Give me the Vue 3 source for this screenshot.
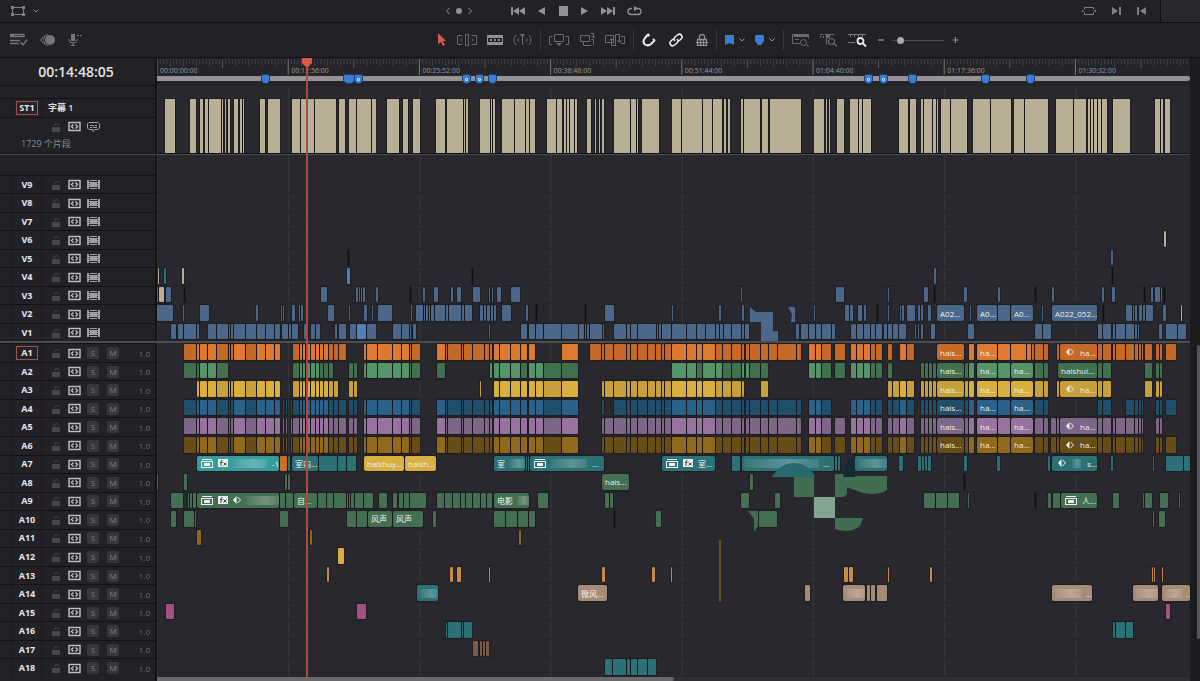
<template>
  <div class="editor">
    <header class="transport-bar">
      <div class="view-mode">
        <button v-for="n in ['frame', 'chevron']" :key="n" :aria-label="n"><Icon :name="n" /></button>
      </div>
      <div class="keyframe-nav">
        <button v-for="n in ['prevKey', 'dot', 'nextKey']" :key="n" :aria-label="n"><Icon :name="n" /></button>
      </div>
      <div class="transport">
        <button v-for="n in ['toStart', 'reverse', 'stop', 'play', 'toEnd', 'loop']" :key="n" :aria-label="n">
          <Icon :name="n" />
        </button>
      </div>
      <div class="match-tools">
        <button v-for="n in ['fit', 'markOut', 'markIn']" :key="n" :aria-label="n"><Icon :name="n" /></button>
      </div>
      <div class="bar-corner"></div>
    </header>

    <div class="toolbar">
      <div class="tools-left">
        <button v-for="n in ['viewOptions', 'curves', 'mic']" :key="n" :aria-label="n"><Icon :name="n" /></button>
      </div>
      <div class="tools-edit">
        <button class="is-red" aria-label="select"><Icon name="arrow" /></button>
        <button class="dim" aria-label="trim"><Icon name="trim" /></button>
        <button aria-label="blade"><Icon name="blade" /></button>
        <button class="dim" aria-label="dynamic trim"><Icon name="dynamic" /></button>
        <i class="sep"></i>
        <button class="dim" aria-label="insert"><Icon name="insert" /></button>
        <button class="dim" aria-label="overwrite"><Icon name="overwrite" /></button>
        <button class="dim" aria-label="replace"><Icon name="replace" /></button>
        <i class="sep"></i>
        <div class="toggles">
          <button class="is-on" aria-label="snap"><Icon name="magnet" /></button>
          <button class="is-on" aria-label="link"><Icon name="link" /></button>
          <button aria-label="lock"><Icon name="padlock" /></button>
        </div>
        <i class="sep"></i>
        <div class="pair">
          <button class="is-blue" aria-label="flag"><Icon name="flag" /></button>
          <button aria-label="flag colors"><Icon name="chevron" /></button>
        </div>
        <div class="pair">
          <button class="is-blue" aria-label="marker"><Icon name="marker" /></button>
          <button aria-label="marker colors"><Icon name="chevron" /></button>
        </div>
        <i class="sep"></i>
        <button class="dim" aria-label="zoom full"><Icon name="zoomFull" /></button>
        <button class="dim" aria-label="zoom detail"><Icon name="zoomDetail" /></button>
        <button class="is-on" aria-label="zoom custom"><Icon name="zoomCustom" /></button>
        <div class="zoom">
          <button class="dim" aria-label="zoom out"><Icon name="minus" /></button>
          <input v-model="zoom" type="range" min="0" max="100" aria-label="timeline zoom" />
          <button aria-label="zoom in"><Icon name="plus" /></button>
        </div>
      </div>
    </div>

    <main class="arrange">
      <div class="tracks">
        <div class="row ruler-row">
          <div class="head timecode">00:14:48:05</div>
          <div class="ruler">
            <svg class="ticks" width="100%" height="18">
              <line
                v-for="t in ticks"
                :key="t.i"
                :x1="t.x"
                :x2="t.x"
                y1="1"
                :y2="t.len"
                :class="t.kind"
              />
            </svg>
            <span v-for="r in rulerLabels" :key="r.text" class="ruler-label" :style="{ left: r.left }">{{ r.text }}</span>
            <div class="overview"></div>
            <i
              v-for="m in markers"
              :key="m.x"
              class="pin"
              :class="{ wide: m.wide, ring: m.ring }"
              :style="{ left: pct(m.x) }"
            ></i>
          </div>
        </div>

        <div class="row spacer">
          <div class="head"></div>
          <div class="lane"></div>
        </div>

        <div class="row subtitle">
          <div class="head">
            <div class="sub-top">
              <span class="grip"></span>
              <span class="name"><b class="target">ST1</b></span>
              <span class="title">字幕 1</span>
            </div>
            <div class="sub-icons">
              <button class="lock" aria-label="lock ST1"><Icon name="lock" /></button>
              <button class="sync" aria-label="sync ST1"><Icon name="sync" /></button>
              <button class="film" aria-label="show ST1"><Icon name="caption" /></button>
            </div>
            <div class="count">1729 个片段</div>
          </div>
          <div class="lane">
            <i v-for="c in subtitleClips" :key="c.key" class="clip cream" :style="c.style"></i>
          </div>
        </div>

        <div class="divider"></div>
        <div class="row gap">
          <div class="head"></div>
          <div class="lane"></div>
        </div>

        <section v-for="group in groups" :key="group.id" :class="group.id">
          <div v-for="t in group.tracks" :key="t.name" class="row track">
            <div class="head">
              <span class="grip"></span>
              <span class="name"><b :class="{ target: t.name === 'A1' }">{{ t.name }}</b></span>
              <button class="lock" :aria-label="'lock ' + t.name"><Icon name="lock" /></button>
              <button class="sync" :aria-label="'sync ' + t.name"><Icon name="sync" /></button>
              <button v-if="group.id === 'video'" class="film" :aria-label="'show ' + t.name"><Icon name="film" /></button>
              <template v-else>
                <button class="sm">S</button>
                <button class="sm">M</button>
                <span class="gain">1.0</span>
              </template>
            </div>
            <div class="lane">
              <i v-for="c in t.clips" :key="c.key" class="clip" :class="[t.color, c.mod]" :style="c.style"></i>
              <div
                v-for="l in t.named"
                :key="l.key"
                class="clip named"
                :class="[l.color, { inset: l.icons || l.phase }]"
                :style="l.style"
              >
                <Icon v-if="l.icons" name="card" />
                <Icon v-if="l.icons === 2" name="fx" />
                <Icon v-if="l.phase" name="phase" />
                <i v-if="l.smudge" class="smudge"></i>
                <span v-if="l.text">{{ l.text }}</span>
              </div>
            </div>
          </div>
        </section>

        <div class="row bottom">
          <div class="head"></div>
          <div class="hscroll"><i></i></div>
        </div>

        <!-- spans the lanes only, so percentages match the clips -->
        <div class="overlay">
          <svg viewBox="157 58 1033 619" preserveAspectRatio="none">
            <g fill="#4b678a">
              <path d="M750 307l6 5h17v19h5v10h-17v-19h-11z" />
              <path d="M788 307h7v15h-4l1-8z" />
            </g>
            <path fill="#416d50" d="M748 511h10v15l-4 6v-13z" />
            <g fill="#416d50">
              <path d="M794 474h20v23h-20z" />
              <path d="M835 474h12v20l-3 3h-9z" />
              <path d="M843 476h44v14q-14 8-32 0l-12-4z" />
              <path d="M835 518h28l-3 8q-10 8-25 3z" />
            </g>
            <path fill="#7fa58f" d="M814 497h21v21h-21z" />
            <path fill="#28686e" d="M772 477q8-14 22-14t21 14z" />
            <path fill="#102b31" d="M843 477l5-16 7-4v20z" />
            <path fill="#66501f" d="M719 540h2v62h-2z" />
          </svg>
          <div class="playhead" :style="{ left: playhead }">
            <svg width="12" height="10" viewBox="0 0 12 10"><path d="M1 0h10v5L7 9H5L1 5z" fill="#dd5a4b" /></svg>
          </div>
        </div>
      </div>

      <aside class="vscroll">
        <i class="before"></i>
        <i class="thumb"></i>
        <i class="after"></i>
      </aside>
    </main>
  </div>
</template>

<script setup>
import { h, ref } from 'vue'

const zoom = ref(12)

// width, height, filled path, stroked path
const ICONS = {
  frame: [14, 12, 'M0 1h3v3H0zM11 1h3v3h-3zM0 8h3v3H0zM11 8h3v3h-3z', 'M2 2.500h10M2 9.500h10M1.500 3v6M12.500 3v6'],
  chevron: [6, 6, '', 'M.5 1.500l2.500 2.500 2.500-2.500'],
  prevKey: [4, 8, '', 'M3.500 1L.5 4l3 3'],
  nextKey: [4, 8, '', 'M.5 1l3 3-3 3'],
  dot: [6, 8, 'M3 1a3 3 0 1 1 0 6a3 3 0 1 1 0-6z', ''],
  toStart: [15, 10, 'M0 1h2v8H0zM8 1v8L2 5zM14 1v8L8 5z', ''],
  reverse: [8, 10, 'M7 1v8L0 5z', ''],
  stop: [10, 10, 'M1 0h9v10H1z', ''],
  play: [8, 10, 'M1 1v8l7-4z', ''],
  toEnd: [15, 10, 'M13 1h2v8h-2zM7 1v8l6-4zM1 1v8l6-4z', ''],
  loop: [15, 11, 'M7 0v5l4-2.500z', 'M5 2.500H4a3 3 0 0 0 0 6h7a3 3 0 0 0 0-6h-1', 1.3],
  fit: [14, 10, 'M0 3.500v3L2 5zM14 3.500v3L12 5z', 'M2.500 3.500v-2h9v2M2.500 6.500v2h9v-2'],
  markOut: [9, 10, 'M0 1v8l6-4zM7 1h2v8H7z', ''],
  markIn: [9, 10, 'M9 1v8L3 5zM0 1h2v8H0z', ''],
  viewOptions: [18, 14, 'M0 1h4v3H0z', 'M0 1.500h14v2H0M0 7.500h10M0 10.500h9M10.500 9l2.500 3 4-5.500', 1.3],
  curves: [16, 12, 'M10 1a5 5 0 1 1 0 10a5 5 0 1 1 0-10z', 'M8 .5L5.500 1.500 3 6l2.500 4.500L8 11.500M4.500 1.500L.5 6l4 4.500'],
  mic: [14, 14, 'M3 1h4v7H3z', 'M1 6v1q0 3 4 3t4-3V6M5 10v3M3 12.500h4M9 2.500h2M12 2.500h2'],
  arrow: [10, 14, 'M1 0l8 8H6l2 4-2 1-2-4-3 2z', ''],
  trim: [20, 14, '', 'M8.500 1.500h3v11h-3zM5.500 2.500h-5v9h5M14.500 2.500h5v9h-5M5.500 5L3.500 7l2 2M14.500 5l2 2-2 2'],
  blade: [16, 12, 'M0 1h16v3H0zM0 8h16v3H0zM0 4h1v4H0zM15 4h1v4h-1zM3 5h2v2H3zM7 5h2v2H7zM11 5h2v2h-2z', ''],
  dynamic: [19, 14, 'M7 1h5l-2 3H9z', 'M9.500 2v10M3 2q-4 5 0 10M16 2q4 5 0 10M6.500 5l-2 2 2 2M12.500 5l2 2-2 2'],
  insert: [20, 14, 'M7 10h6l-3 3z', 'M5.500 1.500h9v7h-9zM3.500 3.500h-3v8h3M16.500 3.500h3v8h-3'],
  overwrite: [16, 14, '', 'M1.500 2.500h9v6h-9zM4.500 8.500v4h8M12 .5h2.500v4M12.500 3l2 2 1.500-2M12.500 6.500h2v6'],
  replace: [20, 14, '', 'M.5 2.500h8v7h-8zM6.500 12.500v-7M4.500 7.500l2-2 2 2M6.500 12.500h4V1.500h4v8M12.500 7l2 2.500 2-2.500M16 3.500h3.500v7H16'],
  magnet: [14, 14, '', 'M6 1.500L3 5q-3 4 0 6.500 3 2 6-.5l3.500-3.500M5.500 1l2 2M11 6l2 2', 2],
  link: [14, 14, '', 'M6 8Q4 6 6 4l2.500-2Q11 0 12.500 2.500 14 4 12 6l-2 2M8 6q2 2 0 4l-2.500 2Q3 14 1.500 11.500 0 10 2 8l2-2', 1.6],
  padlock: [12, 12, 'M0 8h12v1H0z', 'M3.500 5V2.500q0-2 2.500-2t2.500 2V5M1.500 5.500h9v6h-9zM4.500 6v5M7.500 6v5', 1.3],
  flag: [9, 10, 'M0 0h9v10L4.500 8 0 10z', ''],
  marker: [9, 10, 'M1 0h7l1 1v5L6 10H3L0 6V1z', ''],
  zoomFull: [18, 14, 'M2 1h14v3H2z', 'M.5 1.500h16v4M.5 1.500v9h8M3 6.500h4M14.500 9.500a3 3 0 1 0-6 0a3 3 0 1 0 6 0M14 11.500l3 2'],
  zoomDetail: [18, 14, 'M7 1h3v4H7z', 'M0 1.500h3M5 1.500h9M6.500 1.500v10M.5 3v2M3.500 3v2M14.500 8.500a3 3 0 1 0-6 0a3 3 0 1 0 6 0M14 10.500l3 3', 1.2],
  zoomCustom: [20, 14, '', 'M15.500 8a3 3 0 1 0-6 0a3 3 0 1 0 6 0M15 10.500l3 3', 1.8],
  minus: [6, 8, 'M0 3h6v2H0z', ''],
  plus: [7, 8, '', 'M3.500 1v6M.5 4h6'],
  lock: [10, 10, 'M1 5h8v5H1z', 'M3.500 4V3.500q0-2 2-2t2 2'],
  sync: [13, 11, '', 'M1 1.500h11v8H1zM5.500 3.500l-2 2 2 2M7.500 3.500l2 2-2 2', 1.5],
  film: [13, 11, 'M0 1h2v9H0zM11 1h2v9h-2zM3 1h7v1H3zM3 9h7v1H3zM3 3h7v5H3zM2 3h9v1H2zM2 5h9v1H2zM2 7h9v1H2z', ''],
  caption: [13, 11, 'M3 4h4v1H3zM8 4h2v1H8zM3 6h2v1H3zM6 6h4v1H6z', 'M2 1.500h9l1.500 1.500v4L11 8.500H8l-2 2v-2H2L.5 7V3z'],
  card: [12, 9, 'M1 0h10v1H1zM0 2h12v1H0zM0 3h1v6H0zM11 3h1v6h-1zM1 8h10v1H1zM3 4h6v3H3z', ''],
  fx: [10, 8, 'M0 0h10v8H0z', ''],
  phase: [8, 8, 'M3.500 0v8L0 4z', 'M4.500 1l3 3-3 3']
}

const Icon = ({ name }) => {
  const [w, ht, fill, stroke, sw] = ICONS[name]
  return h('svg', { class: 'icon icon-' + name, width: w, height: ht, viewBox: `0 0 ${w} ${ht}` }, [
    fill && h('path', { d: fill, fill: 'currentColor' }),
    stroke && h('path', { d: stroke, fill: 'none', stroke: 'currentColor', 'stroke-width': sw || 1 }),
    name === 'zoomCustom' && h('path', { d: 'M0 1.500h18M2.500 2v2M6.500 2v2M10.500 2v2M14.500 2v2M0 9.500h7', fill: 'none', stroke: '#7c7c80' }),
    name === 'fx' && h('path', { d: 'M4.500 1.500Q3 1 3 3v4M2 3.500h2.500M5.500 3.500l3 3M8.500 3.500l-3 3', fill: 'none', stroke: '#2c5550' })
  ])
}
Icon.props = ['name']

// visible range of the timeline, in timeline units
const FROM = 157
const TO = 1190
const pct = (x) => `${((x - FROM) / (TO - FROM)) * 100}%`
const len = (w) => `${(w / (TO - FROM)) * 100}%`

const playhead = pct(306)
const STEP = 131.2

const ticks = Array.from({ length: 315 }, (_, i) => {
  const kind = i % 40 === 0 ? 'major' : i % 20 === 0 ? 'mid' : 'minor'
  return { i, kind, x: pct(FROM + (i * STEP) / 40), len: { major: 17, mid: 10, minor: i % 4 ? 6 : 8 }[kind] }
})

const rulerLabels = [
  '00:00:00:00', '00:12:56:00', '00:25:52:00', '00:38:48:00',
  '00:51:44:00', '01:04:40:00', '01:17:36:00', '01:30:32:00'
].map((text, i) => ({ text, left: pct(FROM + 3 + i * STEP) }))

const markers = [
  { x: 266 }, { x: 348, wide: true }, { x: 359, ring: true }, { x: 467, ring: true },
  { x: 480, ring: true }, { x: 493 }, { x: 869, ring: true }, { x: 884, ring: true },
  { x: 913 }, { x: 986 }, { x: 1031 }
]

// "start-end" pairs, an optional letter picks the shade
const MODS = { d: 'dark', l: 'light', k: 'black', c: 'cream', o: 'orange', t: 'teal' }
const parse = (s) =>
  s.trim().split(/\s+/).filter(Boolean).map((p) => {
    const [, a, b, m] = p.match(/(\d+)-(\d+)([a-z]?)/)
    return { a: +a, b: +b, m }
  })
const toClip = ({ a, b, m }) => ({
  key: `${a}-${b}-${m}`,
  mod: MODS[m] || '',
  style: { left: pct(a), width: len(b - a) }
})
const clips = (s) => parse(s).map(toClip)

// edit points shared by the production sound tracks
const CUTS = parse(`
  184-196 197-199 200-207 208-216 217-228 229-230 231-233 234-245 246-256 257-265 266-274 275-280
  283-284 286-287 291-292 293-299 300-302 303-305 306-310 311-315 316-319 320-323 324-328 329-333 334-338 339-346
  349-353 354-357 364-366 367-377 378-392 393-401 402-409 410-411 412-420
  437-445 446-447 448-461 462-463 464-472 473-484 485-489 490-492 494-499 500-510 511-520 521-527
  529-535 536-543 544-561 562-578 590-601 602-604 605-613 614-626 627-630 631-637 638-647 648-655 656-661
  662-664 665-671 672-686 687-696 697-702 703-715 716-722 723-731 732-741 742-744 746-749 750-760 761-768
  769-777 778-796 797-801 809-815 816-821 822-831 835-845
  851-856 857-863 864-870 871-875 876-882 888-892 893-899 900-906 907-914
  921-924 925-928 929-932 933-936 937-964 965-968 969-974 977-997 998-1010 1011-1026 1027-1031 1032-1034 1035-1043 1044-1048
  1051-1056 1057-1059 1060-1097 1098-1102 1103-1111 1113-1115 1116-1125 1126-1134 1135-1138 1139-1141 1142-1143
  1145-1152 1156-1159 1160-1162 1166-1176`)

const LOUD = '197-216 234-245 256-280 296-331 364-409 437-445 494-543 562-578 672-715 809-821 851-870 900-906 969-1031'

const bed = (spans, loud = LOUD) => {
  const bright = parse(loud)
  return parse(spans).flatMap(({ a, b }) =>
    CUTS.filter((c) => c.a >= a && c.b <= b).map((c) =>
      toClip({ ...c, m: bright.some((r) => c.a >= r.a && c.b <= r.b) ? '' : 'd' })
    )
  )
}

const named = (list) =>
  list.map(([a, b, color, text, extra]) => ({
    key: a, color, text, ...extra, style: { left: pct(a), width: len(b - a) }
  }))

const subtitleClips = clips(`
  165-175 190-196 200-203 205-208 209-221 222-223 225-226 228-230 234-238 240-242 243-244 260-265 268-280
  292-300 301-314 315-336 339-345 349-356 357-371 372-376 387-399 403-408 413-420 436-445 447-463 464-465 466-468
  480-490 491-492 493-495 502-514 515-525 526-529 530-535 547-556 557-562 564-566 567-569 570-574 575-577
  587-591 595-596 599-600 602-604 614-630 631-636 637-638 642-659 672-681 682-702 703-712 713-722 724-726 728-730
  741-743 744-760 762-768 770-801 814-824 826-827 829-830 837-844 850-858 859-862 863-871 899-908 910-916
  921-923 924-932 933-936 937-938 941-950 951-967 973-990 991-1011 1014-1024 1025-1048 1056-1073 1074-1086
  1088-1090 1091-1093 1094-1097 1098-1101 1102-1107 1113-1130 1155-1160 1161-1163 1165-1170`)

const video = [
  { name: 'V9' }, { name: 'V8' }, { name: 'V7' },
  { name: 'V6', clips: clips('1164-1166c') },
  { name: 'V5', clips: clips('348-349k 1111-1113') },
  { name: 'V4', clips: clips('158-159c 164-166t 182-184c 347-350l 472-473k 934-936 1112-1113k') },
  {
    name: 'V3',
    clips: clips(`157-158 159-164c 166-171 184-185k 321-327 356-358 359-360 361-362 363-365 376-378 410-411k 423-425
      434-438 451-453 457-461 473-480 489-490 492-493 497-501 511-520 741-742 836-844 888-889 924-928 934-935k
      964-967 998-1000 1035-1036k 1052-1054 1102-1104 1112-1115 1144-1145k 1151-1153 1155-1160 1161-1162 1164-1165k`)
  },
  {
    name: 'V2',
    clips: clips(`157-173 183-184 200-209 256-258 281-282 283-284 292-295 299-300 301-303 328-334 349-350 364-367 372-373
      378-392 411-412 416-423 424-425 426-428 429-430 431-434 435-445 446-448 449-461 462-464 465-472 480-483
      484-486 487-490 491-493 494-496 502-511 526-528 536-537k 585-586k 605-614 672-673 719-721 742-744 814-815
      845-849 850-853 858-862 864-866 877-878k 888-889 900-901 902-904 907-915 918-920 921-923 928-931 970-971
      998-1010 1042-1043 1103-1104k 1126-1132 1133-1134 1135-1137 1139-1142 1143-1145 1146-1153 1163-1166 1181-1182c`),
    named: named([[937, 964, 'blue', 'A02...'], [977, 997, 'blue', 'A0...'], [1011, 1033, 'blue', 'A0...'], [1052, 1097, 'blue', 'A022_052...']])
  },
  {
    name: 'V1',
    clips: clips(`171-176 178-183 184-196 197-199 208-216 217-228 229-230 231-233 234-245 246-256 257-265 266-274 275-280
      282-288 289-291 292-298 304-308 311-315 316-320 335-337 339-346 350-356 357-366l 367-376 393-401 402-409
      410-411 413-416 489-490 521-527 529-535 536-543 544-561 562-578 579-584 585-586 587-589 590-602 603-604
      614-626 627-630 631-637 638-656 657-658 659-661 662-671 672-686 687-696 697-705 706-715 716-719 720-723
      724-731 732-741 742-744 745-749 796-799 801-808 809-815 816-821 822-831 832-835 851-856 857-863 864-870
      871-875 876-882 884-887 888-892 893-898 899-906 915-916 918-919 921-923 931-935 968-974 1035-1042 1043-1051
      1098-1102 1103-1111 1113-1115 1116-1125 1126-1134 1135-1137 1138-1139 1159-1162 1166-1177 1178-1186`)
  }
].map((t) => ({ color: 'blue', ...t }))

const audio = [
  {
    name: 'A1', color: 'orange',
    clips: bed('184-280 293-346 364-420 437-535 562-578 590-801 809-845 851-882 888-892 900-914 969-1048 1057-1059 1098-1176'),
    named: named([[937, 964, 'orange dark', 'hais...'], [977, 997, 'orange', 'ha...'], [1060, 1097, 'orange dark', 'ha...', { phase: true }]])
  },
  {
    name: 'A2', color: 'green',
    clips: bed(
      '184-228 293-333 349-357 364-420 437-445 490-578 672-768 809-845 851-882 888-892 921-936 965-1010 1035-1048 1098-1111 1145-1162',
      '200-216 300-319 364-409 490-520 529-543 672-696 703-722 742-749 809-821 851-870 969-1031'
    ),
    named: named([[937, 964, 'green dark', 'hais...'], [977, 997, 'green', 'ha...'], [1011, 1033, 'green', 'ha...'], [1058, 1097, 'green dark', 'haishui...']])
  },
  {
    name: 'A3', color: 'yellow',
    clips: [...bed('197-280 293-338 349-357 494-578 602-744 761-768 888-936 965-1010 1035-1048 1057-1059 1098-1111 1145-1162'), ...clips('480-481d')],
    named: named([[937, 964, 'yellow dark', 'hais...'], [977, 997, 'yellow', 'ha...'], [1011, 1033, 'yellow', 'ha...'], [1060, 1097, 'yellow dark', 'ha...', { phase: true }]])
  },
  {
    name: 'A4', color: 'navy',
    clips: bed('184-346 349-357 364-420 437-578 602-604 614-801 809-831 851-882 888-936 965-1010 1035-1048 1098-1111 1126-1143 1156-1176'),
    named: named([[937, 964, 'navy dark', 'hais...'], [977, 997, 'navy', 'ha...'], [1011, 1033, 'navy', 'ha...']])
  },
  {
    name: 'A5', color: 'purple',
    clips: bed('184-346 349-357 364-420 437-578 602-801 809-831 835-845 851-882 888-936 965-1010 1035-1059 1098-1143 1156-1162'),
    named: named([[937, 964, 'purple dark', 'hais...'], [977, 997, 'purple', 'ha...'], [1011, 1033, 'purple', 'ha...'], [1060, 1097, 'purple dark', 'ha...', { phase: true }]])
  },
  {
    name: 'A6', color: 'brown',
    clips: bed('184-346 349-357 364-420 437-578 602-801 809-831 835-845 851-882 888-936 965-1010 1035-1059 1098-1143 1156-1176'),
    named: named([[937, 964, 'brown dark', 'hais...'], [977, 997, 'brown', 'ha...'], [1011, 1033, 'brown', 'ha...'], [1060, 1097, 'brown dark', 'ha...', { phase: true }]])
  },
  {
    name: 'A7', color: 'teal',
    clips: clips(`280-287o 288-290 319-337 338-346 347-356 526-527 528-529 732-740 835-837 838-840 899-903 918-921 922-924
      925-927 928-931 964-967 997-1000 1048-1050 1111-1113 1153-1154 1166-1183 1184-1190`),
    named: named([
      [197, 279, 'aqua', '-1', { icons: 2, smudge: true }],
      [292, 318, 'teal', '室内...'],
      [364, 404, 'yellow', 'haishuy...'],
      [405, 436, 'yellow', 'haish...'],
      [494, 525, 'teal tail', '室', { smudge: true }],
      [530, 604, 'teal', '...', { icons: 1, smudge: true }],
      [662, 715, 'teal', '室...', { icons: 2 }],
      [742, 834, 'teal long', '...', { smudge: true }],
      [855, 887, 'teal', '', { smudge: true }],
      [1052, 1097, 'teal', 's...', { phase: true, smudge: true }]
    ])
  },
  {
    name: 'A8', color: 'green low',
    clips: clips('157-158 184-187 285-287 288-290 750-753 964-965k'),
    named: named([[602, 629, 'green low', 'hais...']])
  },
  {
    name: 'A9', color: 'green low',
    clips: clips(`171-183 188-189 190-192 193-196 280-285 286-293 318-326 327-333 334-346 347-348 349-350 351-354 355-363
      364-373 379-387 393-397 399-403 404-409 410-426 437-444 445-452 453-460 461-465 466-472 473-480 481-486 487-492
      538-548 605-609 610-613 741-749 775-780 924-935 936-947 948-959 968-969 1035-1036k 1048-1051 1053-1060
      1113-1119 1143-1144 1145-1152 1160-1168 1179-1180`),
    named: named([
      [197, 279, 'green low', '', { icons: 2, phase: true, smudge: true }],
      [294, 317, 'green low', '自...'],
      [494, 529, 'green low tail', '电影', { smudge: true }],
      [1061, 1097, 'green low', '人...', { icons: 1 }]
    ])
  },
  {
    name: 'A10', color: 'green low',
    clips: clips(`171-176 184-194 195-196 280-288 347-356 357-367 433-436 494-505 506-517 518-528 529-535 614-615k
      656-661 759-777 1153-1154 1159-1165`),
    named: named([[368, 392, 'green low', '风声'], [393, 423, 'green low', '风声']])
  },
  { name: 'A11', color: 'brown', clips: clips('197-201 310-312 519-521') },
  { name: 'A12', color: 'yellow', clips: clips('338-344') },
  {
    name: 'A13', color: 'amber',
    clips: clips('327-329 450-453 457-461 489-490 602-605 652-655 671-672 844-848 849-853 888-889 930-932 1152-1153 1154-1155 1162-1163')
  },
  {
    name: 'A14', color: 'tan',
    clips: clips('805-810 867-870 871-875 877-887'),
    named: named([
      [417, 438, 'teal', '', { smudge: true }],
      [578, 607, 'tan', '微风...'],
      [843, 865, 'tan', '', { smudge: true }],
      [1052, 1092, 'tan', '...', { smudge: true }],
      [1133, 1158, 'tan', '', { smudge: true }],
      [1162, 1190, 'tan', '..', { smudge: true }]
    ])
  },
  { name: 'A15', color: 'pink', clips: clips('166-174 357-366 1166-1170') },
  { name: 'A16', color: 'teal', clips: clips('446-447 448-461 462-463 464-472 1113-1115 1116-1125 1126-1133') },
  { name: 'A17', color: 'rust', clips: clips('473-478 480-482 483-485 486-489') },
  { name: 'A18', color: 'teal', clips: clips('605-612 613-626 627-630 631-637 638-647 648-656') }
]

const groups = [
  { id: 'video', tracks: video },
  { id: 'audio', tracks: audio }
]
</script>

<style>
body {
  margin: 0;
  background: #212126;
}
</style>

<style scoped>
.editor {
  display: flex;
  flex-direction: column;
  height: 100vh;
  overflow: hidden;
  background: #212126;
  color: #d8d8da;
  font-family: 'Open Sans', 'Noto Sans CJK SC', sans-serif;
  font-size: 9px;
}

button {
  display: flex;
  align-items: center;
  justify-content: center;
  flex: none;
  padding: 0;
  border: 0;
  background: none;
  color: #929295;
  font: inherit;
}

.icon {
  display: block;
  flex: none;
}

/* top bar */
.transport-bar {
  display: flex;
  align-items: center;
  flex: none;
  height: 22px;
  border-bottom: 1px solid #0f0f12;
}

.view-mode,
.keyframe-nav,
.transport,
.match-tools {
  display: flex;
  align-items: center;
}

.view-mode {
  gap: 8px;
  width: 435px;
  padding-left: 11px;
}

.view-mode button,
.match-tools button {
  color: #818184;
}

.keyframe-nav {
  gap: 6px;
  width: 65px;
}

.transport {
  gap: 12px;
}

.match-tools {
  gap: 16px;
  margin-left: auto;
  padding-right: 14px;
}

.bar-corner {
  align-self: stretch;
  width: 39px;
  border-left: 1px solid #0f0f12;
  background: #29282e;
}

/* toolbar */
.toolbar {
  display: flex;
  align-items: center;
  flex: none;
  height: 34px;
  border-bottom: 1px solid #0f0f12;
}

.tools-left {
  display: flex;
  align-items: center;
  gap: 12px;
  width: 427px;
  padding-left: 10px;
}

.tools-left button {
  color: #76767a;
}

.tools-edit {
  display: flex;
  align-items: center;
  gap: 10px;
}

.tools-edit .dim {
  color: #6c6c70;
}

.tools-edit .is-red {
  color: #cf5a4e;
}

.tools-edit .is-on {
  color: #ededee;
}

.tools-edit .is-blue {
  color: #3b7dd0;
}

.sep {
  width: 1px;
  height: 20px;
  margin: 0 -2px;
  background: #37373b;
}

.toggles {
  display: flex;
  align-items: center;
  gap: 13px;
}

.pair {
  display: flex;
  align-items: center;
  gap: 5px;
}

.zoom {
  display: flex;
  align-items: center;
  gap: 8px;
}

.zoom input {
  width: 52px;
  height: 8px;
  margin: 0;
  appearance: none;
  background: linear-gradient(#4c4c50, #4c4c50) center / 100% 1px no-repeat;
}

.zoom input::-webkit-slider-thumb {
  width: 7px;
  height: 7px;
  appearance: none;
  border-radius: 50%;
  background: #a9a9ab;
}

/* arrangement */
.arrange {
  display: flex;
  flex: 1;
  min-height: 0;
}

.tracks {
  position: relative;
  display: flex;
  flex: 1;
  flex-direction: column;
  min-width: 0;
}

.row {
  display: flex;
  flex: none;
  min-height: 0;
}

.head {
  box-sizing: border-box;
  flex: none;
  width: 157px;
  border-right: 2px solid #131316;
}

.lane {
  position: relative;
  flex: 1;
  min-width: 0;
  background-color: #29282e;
  background-image: linear-gradient(90deg, #35353a 1px, transparent 1px);
  background-size: 12.7% 100%;
}

.ruler-row {
  height: 28px;
}

.timecode {
  padding-right: 3px;
  border-bottom: 1px solid #131316;
  color: #e4e4e6;
  font-size: 14px;
  font-weight: 600;
  line-height: 28px;
  text-align: center;
}

.ruler {
  position: relative;
  flex: 1;
  background: #242429;
}

.ticks {
  display: block;
}

.ticks line {
  stroke: #424247;
}

.ticks .mid {
  stroke: #56565a;
}

.ticks .major {
  stroke: #77777b;
}

.ruler-label {
  position: absolute;
  top: 8px;
  color: #98989b;
  font-size: 7px;
  line-height: 10px;
}

.overview {
  height: 5px;
  border-radius: 0 3px 3px 0;
  background: #949496;
}

.pin {
  position: absolute;
  top: 17px;
  width: 7px;
  height: 8px;
  margin-left: -4px;
  border-radius: 1px 1px 4px 4px;
  background: #3b7dd0;
  box-shadow: 0 0 0 1px #1b3f70;
}

.pin.wide {
  width: 10px;
}

.pin.ring::after {
  position: absolute;
  top: 3px;
  left: 2px;
  width: 1px;
  height: 1px;
  border: 1px solid #d5e3f5;
  border-radius: 1px;
  content: '';
}

.spacer {
  height: 12px;
}

.subtitle {
  height: 55px;
}

.subtitle .head {
  border-top: 1px solid #131316;
}

.sub-top {
  display: flex;
  height: 18px;
  border-bottom: 1px solid #131316;
}

.grip {
  box-sizing: border-box;
  flex: none;
  width: 12px;
  border-right: 1px solid #19191c;
}

.name {
  box-sizing: border-box;
  display: flex;
  align-items: center;
  justify-content: center;
  flex: none;
  width: 30px;
  padding-left: 1px;
  border-right: 1px solid #19191c;
  color: #e8e8ea;
}

.name b {
  font-size: 9px;
  line-height: 12px;
}

.name .target {
  box-sizing: border-box;
  width: 22px;
  height: 14px;
  border: 1px solid #a8534a;
  text-align: center;
}

.title {
  padding-left: 6px;
  color: #e0e0e2;
  font-weight: 600;
  line-height: 18px;
}

.sub-icons {
  display: flex;
  align-items: center;
  height: 17px;
  padding-left: 42px;
}

.count {
  padding-left: 21px;
  color: #8c8c90;
  line-height: 17px;
}

.divider {
  flex: none;
  height: 1px;
  border-top: 1px solid #131316;
  background: #4c4c4f;
}

.gap {
  height: 20px;
}

.video,
.audio {
  display: grid;
  min-height: 0;
}

.video {
  flex: 167 1 0;
  grid-template-rows: repeat(9, minmax(0, 1fr));
}

.audio {
  flex: 335 1 0;
  grid-template-rows: repeat(18, minmax(0, 1fr));
  border-top: 2px solid #4c4c4f;
}

.track .head {
  display: flex;
  align-items: center;
  border-top: 1px solid #131316;
}

.track .grip,
.track .name {
  align-self: stretch;
}

.track .lane {
  box-shadow: inset 0 -1px #242429;
}

.lock {
  width: 10px;
  margin: 0 7px 0 9px;
  color: #48484c;
}

.sync {
  width: 13px;
  margin-right: 6px;
  color: #bdbdc1;
}

.film {
  color: #a0a0a4;
}

.sm {
  width: 12px;
  height: 12px;
  margin-right: 8px;
  border-radius: 2px;
  background: #37373b;
  color: #808084;
  font-size: 8px;
  line-height: 12px;
}

.gain {
  margin-left: auto;
  padding-right: 5px;
  color: #707074;
  font-size: 8px;
}

/* clips */
.clip {
  position: absolute;
  top: 1px;
  bottom: 2px;
  border-radius: 1px;
  background: var(--tone);
  box-shadow: 0 0 0 1px rgba(14, 14, 18, 0.4);
}

.subtitle .clip {
  bottom: 0;
  border-radius: 0;
}

.blue { --tone: #4b678a; }
.blue.light { --tone: #5081bc; }
.orange { --tone: #df7831; }
.orange.dark { --tone: #c46927; }
.green { --tone: #559369; }
.green.dark { --tone: #41704f; }
.green.low { --tone: #446f53; }
.yellow { --tone: #d9b040; }
.yellow.dark { --tone: #c6a03c; }
.navy { --tone: #2b628a; }
.navy.dark { --tone: #204f6c; }
.purple { --tone: #98739f; }
.purple.dark { --tone: #7e6688; }
.brown { --tone: #91691d; }
.brown.dark { --tone: #694d18; }
.teal,
.blue.teal { --tone: #2b7175; }
.aqua { --tone: #389c9c; }
.amber { --tone: #c98a48; }
.tan { --tone: #a68c76; }
.pink { --tone: #a5517f; }
.rust { --tone: #7c5b4a; }
.cream,
.blue.cream { --tone: #b9af97; }
.teal.orange { --tone: #cf6d22; }
.clip.black { --tone: #101014; }

.named {
  display: flex;
  align-items: center;
  gap: 4px;
  overflow: hidden;
  padding-left: 3px;
  box-sizing: border-box;
  border-radius: 2px;
  color: #f0f0f0;
  font-size: 8px;
  white-space: nowrap;
}

.named.inset {
  gap: 5px;
  padding-left: 4px;
}

.named.inset:has(.icon-phase:first-child) {
  gap: 6px;
  padding-left: 6px;
}

.named.tail .smudge {
  order: 1;
}

.smudge {
  flex: 0 1 36px;
  height: 9px;
  background: linear-gradient(90deg, rgba(255, 255, 255, 0.06), rgba(255, 255, 255, 0.25) 60%, rgba(255, 255, 255, 0.1));
}

.long .smudge {
  flex-basis: 74px;
}

.overlay {
  position: absolute;
  top: 0;
  right: 0;
  bottom: 4px;
  left: 157px;
  pointer-events: none;
}

.overlay > svg {
  display: block;
  width: 100%;
  height: 100%;
}

.playhead {
  position: absolute;
  top: 0;
  bottom: 0;
  width: 2px;
  background: #ad4a42;
}

.playhead svg {
  position: absolute;
  top: 0;
  left: -5px;
}

.bottom {
  height: 4px;
}

.hscroll {
  flex: 1;
  background: #2f2f33;
}

.hscroll i {
  display: block;
  width: 50%;
  height: 4px;
  border-radius: 0 2px 2px 0;
  background: #6a6a6d;
}

.vscroll {
  display: flex;
  flex: none;
  flex-direction: column;
  align-items: flex-end;
  width: 10px;
  background: #1c1c20;
}

.vscroll .before {
  flex: 287;
}

.vscroll .thumb {
  flex: 294;
  width: 3px;
  border-radius: 2px;
  background: #56565a;
}

.vscroll .after {
  flex: 42;
}
</style>
